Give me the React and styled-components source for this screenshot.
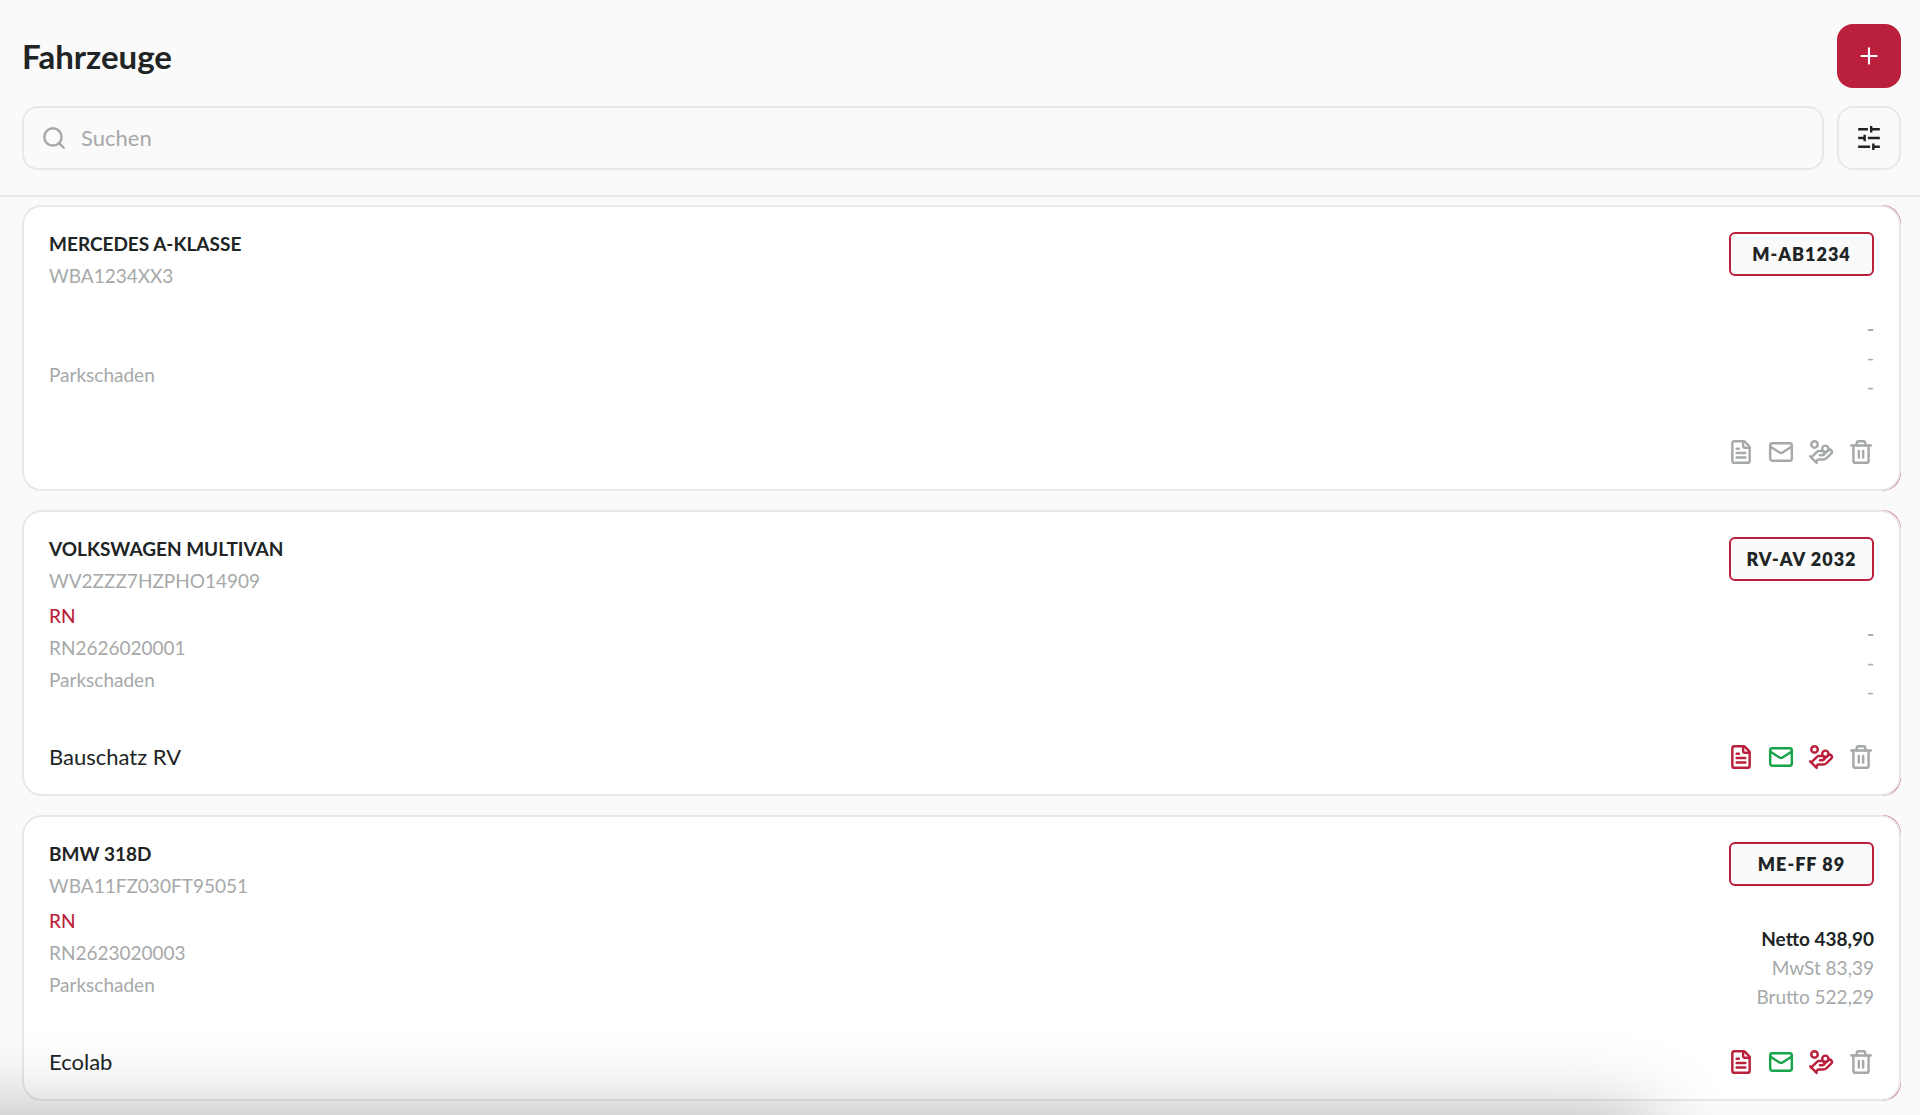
import { useState } from 'react';
import styled, { createGlobalStyle } from 'styled-components';
import { FileText, HandCoins, Mail, Plus, Search, Trash2 } from 'lucide-react';

const GlobalStyle = createGlobalStyle`
  *, *::before, *::after {
    box-sizing: border-box;
  }

  body {
    margin: 0;
    background-color: #fafafa;
    color: #202424;
    font-family: Lato, 'Open Sans', sans-serif;
    font-size: 19px;
    line-height: 32px;
  }

  button, input {
    font: inherit;
  }
`

const Page = styled.div`
  display: flex;
  flex-direction: column;
  min-height: 100vh;
  overflow: hidden;
`

const Header = styled.header`
  display: flex;
  flex-direction: column;
  gap: 18px;
  padding: 24px 19px 25px 22px;
  border-bottom: 2px solid #e8e8e8;
`

const HeaderRow = styled.div`
  display: flex;
  align-items: center;
  justify-content: space-between;
  gap: 13px;
`

const Title = styled.h1`
  margin: 0;
  font-size: 33px;
  font-weight: 700;
  line-height: 40px;
`

const SquareButton = styled.button`
  display: flex;
  flex: none;
  align-items: center;
  justify-content: center;
  width: 64px;
  height: 64px;
  padding: 0;
  border: ${({ $primary }) => ($primary ? 'none' : '2px solid #e8e8e8')};
  border-radius: 16px;
  background-color: ${({ $primary }) => ($primary ? '#ba1f3b' : '#fafafa')};
  color: ${({ $primary }) => ($primary ? '#fff' : '#202424')};
  cursor: pointer;
`

const SearchField = styled.label`
  display: flex;
  flex: 1;
  align-items: center;
  gap: 14px;
  height: 64px;
  padding: 0 17px;
  border: 2px solid #e8e8e8;
  border-radius: 16px;
  color: #a6a9a9;
`

const SearchInput = styled.input`
  flex: 1;
  min-width: 0;
  padding: 0;
  border: none;
  outline: none;
  background: transparent;
  color: #202424;
  font-size: 22px;

  &::placeholder {
    color: #a6a9a9;
    opacity: 1;
  }
`

const List = styled.main`
  display: flex;
  flex: 1;
  flex-direction: column;
  gap: 19px;
  padding: 8px 19px 14px 22px;
`

// Red delete layer that sits under the right end of every card
const SwipeRow = styled.div`
  border-radius: 19px;
  background: linear-gradient(to right, transparent 90%, #ba1f3b 90%);
`

const Card = styled.article`
  display: flex;
  flex-direction: column;
  justify-content: space-between;
  min-height: 286px;
  padding: 21px 25px;
  border: 2px solid #e8e8e8;
  border-radius: 20px;
  background-color: #fff;
`

const CardRow = styled.div`
  display: flex;
  align-items: ${({ $align }) => $align || 'stretch'};
  justify-content: space-between;
  min-height: 32px;
`

const Details = styled.div`
  display: flex;
  flex-direction: column;
`

const Name = styled.h2`
  margin: 0;
  font-size: 19px;
  font-weight: 700;
  line-height: 32px;
`

const Muted = styled.span`
  min-height: 32px;
  color: #a6a9a9;
`

const InvoiceTag = styled.span`
  min-height: 32px;
  margin-top: 3px;
  color: #ba1f3b;
  font-weight: 500;
`

const Side = styled.div`
  display: flex;
  flex-direction: column;
  align-items: flex-end;
  gap: 38px;
  padding-top: 4px;
`

const Plate = styled.div`
  min-width: 145px;
  padding: 2px 14px;
  border: 2px solid #ba1f3b;
  border-radius: 6px;
  background-color: #fafafa;
  font-size: 18px;
  font-weight: 800;
  letter-spacing: 1px;
  line-height: 36px;
  text-align: center;
`

const Amounts = styled.div`
  display: flex;
  flex-direction: column;
  color: #a6a9a9;
  line-height: 29px;
  text-align: right;
`

const Net = styled.strong`
  color: ${({ $empty }) => ($empty ? '#a6a9a9' : '#202424')};
  font-weight: 700;
`

const Customer = styled.span`
  font-size: 22px;
`

const Actions = styled.div`
  display: flex;
  gap: 14px;
`

const IconButton = styled.button`
  display: flex;
  padding: 0;
  border: none;
  background: none;
  color: ${({ $color }) => $color || '#a6a9a9'};
  cursor: pointer;
`

const BottomShade = styled.div`
  position: fixed;
  top: 100%;
  right: 14%;
  left: -100px;
  height: 100px;
  box-shadow: 0 0 80px rgba(0, 0, 0, 0.28);
  pointer-events: none;
`

const vehicles = [
  {
    name: 'MERCEDES A-KLASSE',
    vin: 'WBA1234XX3',
    plate: 'M-AB1234',
    damage: 'Parkschaden',
  },
  {
    name: 'VOLKSWAGEN MULTIVAN',
    vin: 'WV2ZZZ7HZPHO14909',
    plate: 'RV-AV 2032',
    invoice: 'RN2626020001',
    damage: 'Parkschaden',
    customer: 'Bauschatz RV',
  },
  {
    name: 'BMW 318D',
    vin: 'WBA11FZ030FT95051',
    plate: 'ME-FF 89',
    invoice: 'RN2623020003',
    damage: 'Parkschaden',
    customer: 'Ecolab',
    net: '438,90',
    tax: '83,39',
    gross: '522,29',
  },
];

function FilterIcon() {
  return (
    <svg width="26" height="26" viewBox="0 0 24 24" fill="none" stroke="currentColor" strokeWidth="2.25">
      <path d="M22 4h-8M11 4H2M22 12h-11M8 12H2M22 20h-6M13 20H2M14 1v6M8 9v6M16 17v6" />
    </svg>
  );
}

function VehicleCard({ vehicle }) {
  const { name, vin, plate, invoice, damage, customer, net, tax, gross } = vehicle;

  return (
    <SwipeRow>
      <Card>
        <CardRow>
          <Details>
            <Name>{name}</Name>
            <Muted>{vin}</Muted>
            <InvoiceTag>{invoice && 'RN'}</InvoiceTag>
            <Muted>{invoice}</Muted>
            <Muted>{damage}</Muted>
          </Details>
          <Side>
            <Plate>{plate}</Plate>
            <Amounts>
              <Net $empty={!net}>{net ? `Netto ${net}` : '-'}</Net>
              <span>{tax ? `MwSt ${tax}` : '-'}</span>
              <span>{gross ? `Brutto ${gross}` : '-'}</span>
            </Amounts>
          </Side>
        </CardRow>
        <CardRow $align="center">
          <Customer>{customer}</Customer>
          <Actions>
            <IconButton type="button" aria-label="Rechnung" $color={invoice && '#ba1f3b'}>
              <FileText size={26} strokeWidth={2.25} />
            </IconButton>
            <IconButton type="button" aria-label="E-Mail" $color={invoice && '#16a34a'}>
              <Mail size={26} strokeWidth={2.25} />
            </IconButton>
            <IconButton type="button" aria-label="Zahlung" $color={invoice && '#ba1f3b'}>
              <HandCoins size={26} strokeWidth={2.25} />
            </IconButton>
            <IconButton type="button" aria-label="Löschen">
              <Trash2 size={26} strokeWidth={2.25} />
            </IconButton>
          </Actions>
        </CardRow>
      </Card>
    </SwipeRow>
  );
}

export default function App() {
  const [query, setQuery] = useState('');

  const visibleVehicles = vehicles.filter((vehicle) =>
    `${vehicle.name} ${vehicle.vin} ${vehicle.plate}`.toLowerCase().includes(query.toLowerCase())
  );

  return (
    <Page>
      <GlobalStyle />
      <Header>
        <HeaderRow>
          <Title>Fahrzeuge</Title>
          <SquareButton type="button" aria-label="Fahrzeug hinzufügen" $primary>
            <Plus size={26} />
          </SquareButton>
        </HeaderRow>
        <HeaderRow>
          <SearchField>
            <Search size={26} strokeWidth={2.25} />
            <SearchInput
              type="text"
              placeholder="Suchen"
              aria-label="Suchen"
              value={query}
              onChange={(event) => setQuery(event.target.value)}
            />
          </SearchField>
          <SquareButton type="button" aria-label="Filter">
            <FilterIcon />
          </SquareButton>
        </HeaderRow>
      </Header>
      <List>
        {visibleVehicles.map((vehicle) => (
          <VehicleCard key={vehicle.vin} vehicle={vehicle} />
        ))}
      </List>
      <BottomShade />
    </Page>
  );
}
